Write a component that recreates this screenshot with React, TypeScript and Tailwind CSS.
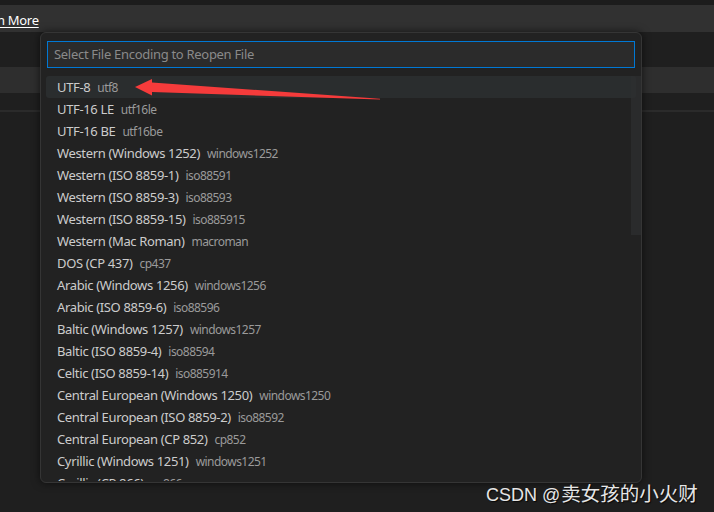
import React from "react";

const items: [string, string][] = [
  ["UTF-8", "utf8"],
  ["UTF-16 LE", "utf16le"],
  ["UTF-16 BE", "utf16be"],
  ["Western (Windows 1252)", "windows1252"],
  ["Western (ISO 8859-1)", "iso88591"],
  ["Western (ISO 8859-3)", "iso88593"],
  ["Western (ISO 8859-15)", "iso885915"],
  ["Western (Mac Roman)", "macroman"],
  ["DOS (CP 437)", "cp437"],
  ["Arabic (Windows 1256)", "windows1256"],
  ["Arabic (ISO 8859-6)", "iso88596"],
  ["Baltic (Windows 1257)", "windows1257"],
  ["Baltic (ISO 8859-4)", "iso88594"],
  ["Celtic (ISO 8859-14)", "iso885914"],
  ["Central European (Windows 1250)", "windows1250"],
  ["Central European (ISO 8859-2)", "iso88592"],
  ["Central European (CP 852)", "cp852"],
  ["Cyrillic (Windows 1251)", "windows1251"],
  ["Cyrillic (CP 866)", "cp866"],
];

export default function App() {
  return (
    <div
      className="relative w-[714px] h-[512px] overflow-hidden bg-[#1f1f1f]"
      style={{ fontFamily: '"Noto Sans", "Open Sans", sans-serif' }}
    >
      {/* background editor chrome */}
      <div className="flex flex-col">
        <div className="h-[5px] bg-[#1c1c1c]" />
        <div className="h-[27px] bg-[#313131] flex items-center pt-[3px] overflow-hidden">
          <span className="-ml-[3px] text-[13px] tracking-[-0.3px] text-white underline underline-offset-2 leading-none whitespace-nowrap">
            n More
          </span>
        </div>
        <div className="h-[35px] bg-[#1f1f1f]" />
        <div className="h-[26px] bg-[#2e2e2e]" />
        <div className="h-[17px] bg-[#1f1f1f]" />
        <div className="h-[2px] bg-[#2b2b2b]" />
      </div>

      {/* quick pick widget */}
      <div className="absolute left-[40px] top-[32px] w-[602px] h-[451px] rounded-[6px] border border-[#353535] bg-[#222222] shadow-[0_0_8px_rgba(0,0,0,0.6)] flex flex-col px-[5px] pt-[8px] pb-[1px]">
        <div className="mx-[1px] h-[27px] border border-[#0078d4] bg-[#2b2b2b] flex items-center px-[6px]">
          <span className="text-[13px] tracking-[-0.3px] text-[#8a8a8a] whitespace-nowrap">
            Select File Encoding to Reopen File
          </span>
        </div>
        <div className="relative mt-[8px] flex-1 min-h-0">
          <div className="h-full overflow-hidden flex flex-col">
            {items.map(([label, desc], i) => (
              <div
                key={label}
                className={`h-[22px] shrink-0 flex items-center pl-[11px] pt-[1px] rounded-[3px] ${i === 0 ? "bg-[#2a2d2e]" : ""}`}
              >
                <span className="text-[13px] tracking-[-0.35px] text-[#cccccc] whitespace-nowrap">{label}</span>
                <span className="ml-[7px] text-[12px] tracking-[-0.55px] text-[#9a9a9a] whitespace-nowrap">{desc}</span>
              </div>
            ))}
          </div>
          <div className="absolute right-[-5px] top-0 w-[10px] h-[159px] bg-[#2d2e2f]/80" />
        </div>
      </div>

      {/* red arrow annotation */}
      <svg className="absolute left-0 top-0" width="714" height="512" viewBox="0 0 714 512">
        <polygon
          points="135,87 152,79 152,82.5 380,98.8 380,99.6 152,92 152,95.5"
          fill="#f53b3b"
        />
      </svg>

      {/* watermark */}
      <div
        className="absolute left-[486px] top-[480px] flex items-baseline text-[#e6e6e6] whitespace-nowrap"
        style={{ fontFamily: '"Liberation Sans", "Noto Sans CJK SC", sans-serif', textShadow: "1px 1px 1px rgba(0,0,0,0.8)" }}
      >
        <span className="text-[18px]">CSDN</span>
        <span className="text-[18px] ml-[5px]">@</span>
        <span className="text-[19.5px] ml-[1px]">卖女孩的小火财</span>
      </div>
    </div>
  );
}
